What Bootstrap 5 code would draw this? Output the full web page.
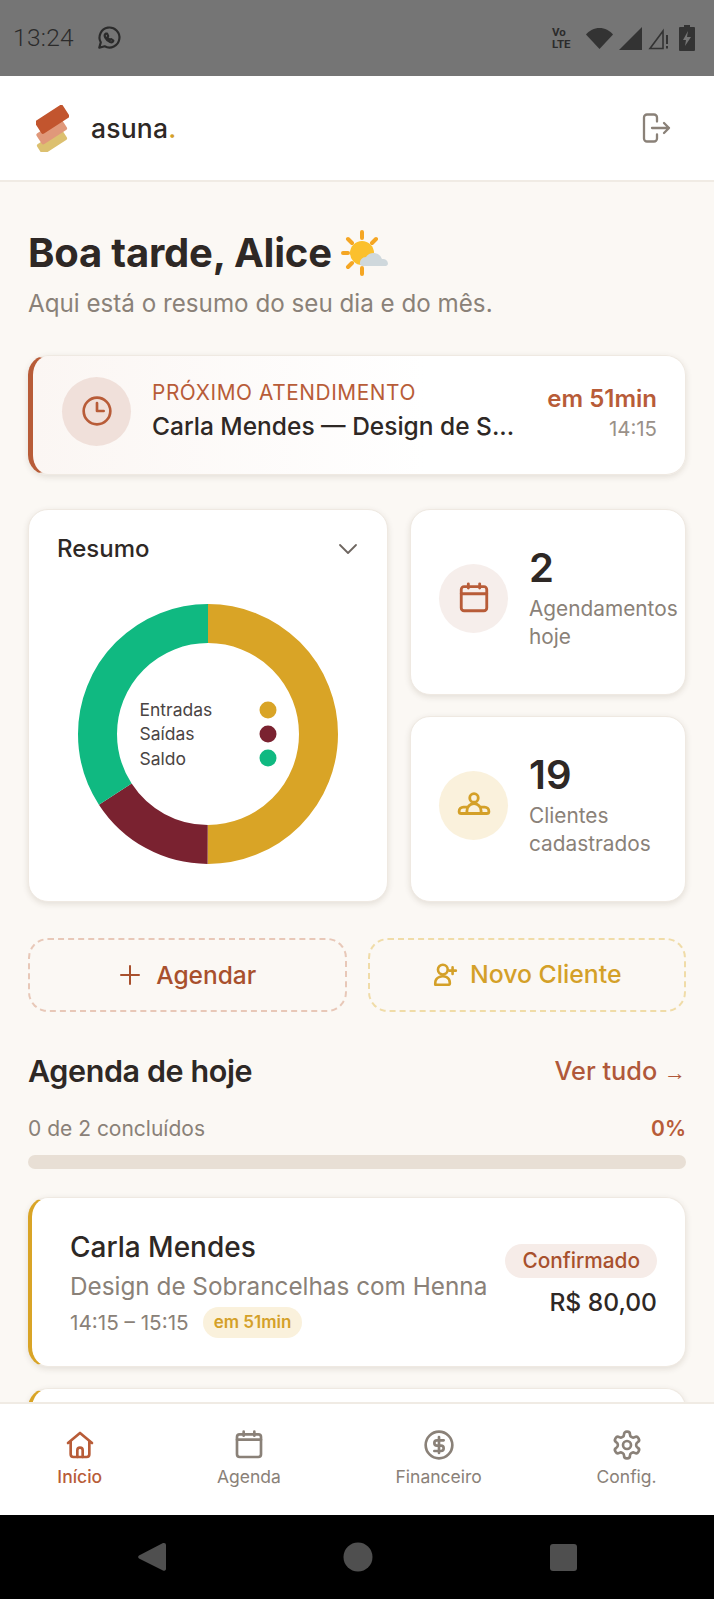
<!DOCTYPE html>
<html lang="pt-BR">
<head>
    <meta charset="UTF-8">
    <meta name="viewport" content="width=device-width, initial-scale=1.0">
    <title>asuna - Início</title>
    <link href="https://cdn.jsdelivr.net/npm/bootstrap@5.3.0/dist/css/bootstrap.min.css" rel="stylesheet">
    <style>
        html, body { height: 1599px; overflow: hidden; }
        body { font-family: Inter, "Liberation Sans", sans-serif; background: #fbf8f4; color: #2e2825; }
        svg { display: block; flex-shrink: 0; }
        .ic { fill: none; stroke: currentColor; stroke-width: 2; stroke-linecap: round; stroke-linejoin: round; }

        .frame { height: 1599px; }
        .status-bar { height: 76px; background: #757575; color: #2b2b2b; padding: 0 19px 0 13px; flex-shrink: 0; }
        .status-time { font-family: Roboto, sans-serif; font-size: 24.5px; font-weight: 300; margin-right: 22px; letter-spacing: .3px; }
        .status-icons { gap: 6px; }
        .volte { font-family: Roboto, sans-serif; font-size: 11.5px; font-weight: 700; line-height: 12px; width: 28px; }
        .battery { margin-left: 3px; }

        .top-bar { height: 106px; background: #fff; border-bottom: 2px solid #f0ebe4; padding: 0 43px 0 36px; flex-shrink: 0; }
        .brand { font-size: 26.5px; font-weight: 500; color: #2e2825; margin: 2px 0 0 22px; letter-spacing: .2px; }
        .brand span { color: #d4a028; }
        .logout { color: #8a8178; stroke-width: 2.3; }

        .page { padding: 0 28px; overflow: hidden; min-height: 0; }
        .hello { font-size: 40px; font-weight: 700; line-height: 46px; margin: 48px 0 0; letter-spacing: -.2px; color: #2e2825; }
        .hello-sub { font-size: 24.2px; line-height: 30px; color: #8a8178; margin: 13px 0 36px; }

        .soft-card { background: #fff; border: 1px solid #efe9e2; border-radius: 20px; box-shadow: 0 2px 6px rgba(60, 40, 20, .12); }
        .next-card { height: 120px; border-left: 5px solid #b85c38; padding: 0 28px 8px 29px; margin-bottom: 34px; background: linear-gradient(90deg, #fbf6f3, #fff 60%); }
        .round-icon { width: 69px; height: 69px; border-radius: 50%; flex-shrink: 0; }
        .tint-rust { background: #f0e0da; color: #b85c38; }
        .tint-rose { background: #f6eeeb; color: #b85c38; }
        .tint-gold { background: #faf1dc; color: #d4a028; }
        .next-text { margin-left: 21px; padding-bottom: 2px; }
        .next-label { font-size: 20.8px; line-height: 26px; color: #b85c38; letter-spacing: .6px; margin-bottom: 6px; }
        .next-name { font-size: 24.5px; line-height: 28px; font-weight: 500; color: #2e2825; }
        .next-side { padding-top: 4px; }
        .next-when { font-size: 24px; line-height: 28px; font-weight: 600; color: #b85c38; margin-bottom: 3px; }
        .next-time { font-size: 20.4px; line-height: 26px; color: #9a9189; }

        .stats { display: grid; grid-template-columns: 360px 1fr; gap: 21px 22px; grid-template-rows: 186px 186px; margin-bottom: 36px; }
        .summary-card { grid-row: span 2; padding: 24px 28px; }
        .summary-title { font-size: 24px; line-height: 30px; font-weight: 500; }
        .donut { width: 260px; height: 260px; margin: 40px auto 0; }
        .donut-legend { top: 50%; left: 50%; transform: translate(-50%, -50%); width: 137px; font-size: 17.5px; line-height: 24.3px; color: #4a4443; }
        .dot { width: 17px; height: 17px; border-radius: 50%; }
        .stat-card { padding: 0 0 8px 28px; gap: 21px; }
        .stat-text { padding-bottom: 1px; }
        .stat-num { font-size: 40px; line-height: 46px; font-weight: 600; color: #2e2825; margin-bottom: 4px; }
        .stat-label { font-size: 20.8px; line-height: 28px; color: #8a8178; }

        .actions { gap: 21px; margin-bottom: 38px; }
        .dash-btn { flex: 1 1 0; height: 74px; border-radius: 20px; border: 2px dashed #e8c8b8; font-size: 24.5px; font-weight: 500; background: transparent; gap: 14px; color: #a8502d; }
        .dash-btn:hover { color: #a8502d; border-color: #e8c8b8; }
        .dash-gold { border-color: #f0dca8; color: #d4a028; gap: 12px; font-size: 24.8px; }
        .dash-gold:hover { color: #d4a028; border-color: #f0dca8; }
        .dash-gold .ic { stroke-width: 2.4; }

        .section-title { font-size: 30.5px; line-height: 42px; font-weight: 600; margin: 0; letter-spacing: -.4px; color: #2e2825; }
        .see-all { font-size: 25.3px; font-weight: 500; color: #b0583a; text-decoration: none; }
        .see-all small { font-family: "Liberation Sans", sans-serif; font-size: 22px; }
        .done-row { font-size: 21px; line-height: 26px; color: #8a8178; margin: 24px 0 13px; }
        .done-pct { font-weight: 600; color: #b85c38; }
        .day-bar { height: 14px; background: #e8dfd5; border-radius: 7px; margin-bottom: 28px; }

        .appt-card { height: 170px; border-left: 4px solid #d9a426; padding: 3px 28px 0 38px; margin-bottom: 21px; flex-shrink: 0; }
        .appt-name { font-size: 28px; line-height: 36px; font-weight: 500; }
        .appt-service { font-size: 24.3px; line-height: 32px; color: #8a8178; margin: 5px 0 5px; }
        .appt-time { font-size: 20.7px; line-height: 32px; color: #8a8178; }
        .soon-pill { font-size: 17px; line-height: 31px; font-weight: 600; color: #d4a028; background: #faf1dc; border-radius: 16px; padding: 0 11px; margin-left: 14px; }
        .appt-side { padding-bottom: 5px; }
        .state-pill { font-size: 20.8px; line-height: 34px; font-weight: 500; color: #a8502d; background: #f6ece8; border-radius: 17px; padding: 0 17px; }
        .appt-price { font-size: 24.6px; line-height: 32px; font-weight: 500; margin-top: 8px; color: #2e2825; }

        .tab-bar { height: 113px; background: #fff; border-top: 2px solid #f0ebe4; padding: 25px 0 0; flex-shrink: 0; }
        .tab-item { color: #8a8178; font-size: 17.5px; line-height: 24px; text-decoration: none; gap: 4px; }
        .tab-item.on { color: #b85c38; font-weight: 500; }
        .android-bar { height: 84px; background: #000; flex-shrink: 0; gap: 177px; }
    </style>
</head>
<body>
<div class="frame d-flex flex-column">

    <!-- barra de status -->
    <div class="status-bar d-flex align-items-center">
        <span class="status-time">13:24</span>
        <svg width="26" height="26" viewBox="0 0 24 24" class="ic"><path d="M3 21l1.400-5A9.200 9.200 0 1 1 8 19.600z"/><path d="M9 8c-1 .7-1.300 2-.5 3.500 1 2 2.500 3.300 4.500 4.200 1.300.5 2.500 0 3-1.200l-2-1.500-1 .8c-1-.5-2-1.500-2.500-2.500l.8-1-1-2.300z"/></svg>
        <div class="status-icons d-flex align-items-center ms-auto">
            <div class="volte">Vo<br>LTE</div>
            <svg width="27" height="21" viewBox="0 0 27 21"><path d="M13.500 21 0 6.500C3.500 2.500 8 0 13.500 0S23.500 2.500 27 6.500z" fill="#333"/></svg>
            <svg width="23" height="23" viewBox="0 0 23 23"><path d="M23 0v23H0z" fill="#333"/></svg>
            <svg width="22" height="23" viewBox="0 0 22 23" fill="none" stroke="#333" stroke-width="1.600"><path d="M15 4 2 21.500h13z"/><path d="M19 8v9M19 19v2.500" stroke-width="2"/></svg>
            <svg class="battery" width="16" height="26" viewBox="0 0 16 26"><path d="M5 0h6v2h4a1 1 0 0 1 1 1v22a1 1 0 0 1-1 1H1a1 1 0 0 1-1-1V3a1 1 0 0 1 1-1h4z" fill="#333"/><path d="M9 6 4 15h3l-1 6 6-9H8z" fill="#757575"/></svg>
        </div>
    </div>

    <!-- topo -->
    <header class="top-bar d-flex align-items-center">
        <svg width="33" height="47" viewBox="0 0 33 47">
            <rect x="1" y="31" width="30" height="12" rx="2" transform="rotate(-33 16 37)" fill="#dcc070"/>
            <rect x="1" y="20" width="30" height="13" rx="2" transform="rotate(-33 16 27)" fill="#e0987a"/>
            <rect x="0" y="7" width="33" height="15" rx="2" transform="rotate(-33 16 15)" fill="#c2552e"/>
        </svg>
        <span class="brand">asuna<span>.</span></span>
        <svg class="ic logout ms-auto" width="30" height="30" viewBox="0 0 30 30"><path d="M13 1.500H6a3 3 0 0 0-3 3v21a3 3 0 0 0 3 3h7a3 3 0 0 0 3-3v-4M16 8.500v-4a3 3 0 0 0-3-3"/><path d="M11 15h17M23 10l5 5-5 5"/></svg>
    </header>

    <main class="page flex-grow-1">
        <h1 class="hello d-flex align-items-center gap-2">Boa tarde, Alice
            <svg width="50" height="46" viewBox="0 0 50 46">
                <g stroke="#f5a623" stroke-width="4" stroke-linecap="round"><path d="M22 2v6M22 38v6M3 23h5M8 9l4 4M36 9l-4 4M8 37l4-4"/></g>
                <circle cx="22" cy="23" r="12" fill="#fbc02d"/>
                <path d="M20 34a6 6 0 0 1 6-7 9 9 0 0 1 16 2 5 5 0 0 1 6 5 3 3 0 0 1-2 2H22a3 3 0 0 1-2-2z" fill="#cfd8dc"/>
            </svg>
        </h1>
        <p class="hello-sub">Aqui está o resumo do seu dia e do mês.</p>

        <div class="soft-card next-card d-flex align-items-center">
            <div class="round-icon tint-rust d-flex align-items-center justify-content-center">
                <svg class="ic" width="32" height="32" viewBox="0 0 24 24"><circle cx="12" cy="12" r="10"/><path d="M12 6v6h5"/></svg>
            </div>
            <div class="next-text flex-grow-1">
                <div class="next-label">PRÓXIMO ATENDIMENTO</div>
                <div class="next-name">Carla Mendes — Design de S...</div>
            </div>
            <div class="next-side text-end">
                <div class="next-when">em 51min</div>
                <div class="next-time">14:15</div>
            </div>
        </div>

        <div class="stats">
            <div class="soft-card summary-card">
                <div class="d-flex justify-content-between align-items-center">
                    <span class="summary-title">Resumo</span>
                    <svg class="ic" width="22" height="22" viewBox="0 0 22 22" style="color:#6e6660"><path d="M3 7l8 8 8-8" stroke-width="1.800"/></svg>
                </div>
                <div class="donut position-relative">
                    <svg width="260" height="260" viewBox="0 0 260 260" fill="none" stroke-width="39">
                        <g transform="rotate(-90 130 130)">
                            <circle cx="130" cy="130" r="110.500" stroke="#d9a426" stroke-dasharray="347.150 347.150"/>
                            <circle cx="130" cy="130" r="110.500" stroke="#7a2230" stroke-dasharray="109.550 584.750" stroke-dashoffset="-347.150"/>
                            <circle cx="130" cy="130" r="110.500" stroke="#10b981" stroke-dasharray="237.600 456.700" stroke-dashoffset="-456.700"/>
                        </g>
                    </svg>
                    <div class="donut-legend position-absolute">
                        <div class="d-flex justify-content-between align-items-center">Entradas <span class="dot" style="background:#d9a426"></span></div>
                        <div class="d-flex justify-content-between align-items-center">Saídas <span class="dot" style="background:#7a2230"></span></div>
                        <div class="d-flex justify-content-between align-items-center">Saldo <span class="dot" style="background:#10b981"></span></div>
                    </div>
                </div>
            </div>

            <div class="soft-card stat-card d-flex align-items-center">
                <div class="round-icon tint-rose d-flex align-items-center justify-content-center">
                    <svg class="ic" width="34" height="34" viewBox="0 0 24 24"><rect x="3" y="4" width="18" height="17" rx="2"/><path d="M16 2v3M8 2v3M3 9h18"/></svg>
                </div>
                <div class="stat-text">
                    <div class="stat-num">2</div>
                    <div class="stat-label">Agendamentos<br>hoje</div>
                </div>
            </div>

            <div class="soft-card stat-card d-flex align-items-center">
                <div class="round-icon tint-gold d-flex align-items-center justify-content-center">
                    <svg class="ic" width="34" height="34" viewBox="0 0 24 24"><circle cx="12" cy="7" r="3"/><path d="M7 18v-2a5 5 0 0 1 10 0v2M7 13.500H4.500A3 3 0 0 0 1.500 16.500 1.500 1.500 0 0 0 3 18h18a1.500 1.500 0 0 0 1.500-1.500 3 3 0 0 0-3-3H17"/></svg>
                </div>
                <div class="stat-text">
                    <div class="stat-num">19</div>
                    <div class="stat-label">Clientes<br>cadastrados</div>
                </div>
            </div>
        </div>

        <div class="actions d-flex">
            <button type="button" class="btn dash-btn d-flex align-items-center justify-content-center">
                <svg class="ic" width="24" height="24" viewBox="0 0 24 24"><path d="M12 3v18M3 12h18"/></svg>
                Agendar
            </button>
            <button type="button" class="btn dash-btn dash-gold d-flex align-items-center justify-content-center">
                <svg class="ic" width="26" height="26" viewBox="0 0 24 24"><circle cx="10" cy="7" r="4.500"/><path d="M3 21v-1.500a6 6 0 0 1 3.500-5.500c2-1 5-1 7 0 2 1 3 3 3 5.500 0 1-1 1.500-2 1.500H4a1 1 0 0 1-1-1"/><path d="M19 5v6M16 8h6"/></svg>
                Novo Cliente
            </button>
        </div>

        <div class="d-flex justify-content-between align-items-center">
            <h2 class="section-title">Agenda de hoje</h2>
            <a class="see-all" href="#">Ver tudo <small>→</small></a>
        </div>
        <div class="done-row d-flex justify-content-between">
            <span>0 de 2 concluídos</span>
            <span class="done-pct">0%</span>
        </div>
        <div class="day-bar"></div>

        <div class="soft-card appt-card d-flex align-items-center">
            <div class="flex-grow-1">
                <div class="appt-name">Carla Mendes</div>
                <div class="appt-service">Design de Sobrancelhas com Henna</div>
                <div class="appt-time d-flex align-items-center">14:15 – 15:15 <span class="soon-pill">em 51min</span></div>
            </div>
            <div class="appt-side d-flex flex-column align-items-end">
                <span class="state-pill">Confirmado</span>
                <div class="appt-price">R$ 80,00</div>
            </div>
        </div>
        <div class="soft-card appt-card"></div>
    </main>

    <!-- navegação -->
    <nav class="tab-bar d-flex justify-content-around align-items-start">
        <a class="tab-item on d-flex flex-column align-items-center" href="#">
            <svg class="ic" width="32" height="32" viewBox="0 0 24 24"><path d="M3 10.500 12 3l9 7.500M5 9v10a2 2 0 0 0 2 2h10a2 2 0 0 0 2-2V9"/><path d="M10 21v-5a2 2 0 0 1 4 0v5"/></svg>
            Início
        </a>
        <a class="tab-item d-flex flex-column align-items-center" href="#">
            <svg class="ic" width="32" height="32" viewBox="0 0 24 24"><rect x="3" y="4" width="18" height="17" rx="2"/><path d="M16 2v3M8 2v3M3 8h18"/></svg>
            Agenda
        </a>
        <a class="tab-item d-flex flex-column align-items-center" href="#">
            <svg class="ic" width="32" height="32" viewBox="0 0 24 24"><circle cx="12" cy="12" r="10"/><path d="M15.500 8.500h-5a2 2 0 0 0 0 4h3a2 2 0 0 1 0 4h-5M12 6v12"/></svg>
            Financeiro
        </a>
        <a class="tab-item d-flex flex-column align-items-center" href="#">
            <svg class="ic" width="32" height="32" viewBox="0 0 24 24"><path d="M12.220 2h-.44a2 2 0 0 0-2 2v.18a2 2 0 0 1-1 1.730l-.43.250a2 2 0 0 1-2 0l-.15-.08a2 2 0 0 0-2.730.730l-.22.380a2 2 0 0 0 .730 2.730l.15.1a2 2 0 0 1 1 1.720v.51a2 2 0 0 1-1 1.740l-.15.09a2 2 0 0 0-.730 2.730l.22.380a2 2 0 0 0 2.730.730l.15-.08a2 2 0 0 1 2 0l.43.250a2 2 0 0 1 1 1.730V20a2 2 0 0 0 2 2h.44a2 2 0 0 0 2-2v-.18a2 2 0 0 1 1-1.730l.43-.250a2 2 0 0 1 2 0l.15.08a2 2 0 0 0 2.730-.730l.22-.39a2 2 0 0 0-.730-2.730l-.15-.08a2 2 0 0 1-1-1.740v-.5a2 2 0 0 1 1-1.740l.15-.09a2 2 0 0 0 .730-2.730l-.22-.38a2 2 0 0 0-2.730-.730l-.15.08a2 2 0 0 1-2 0l-.43-.25a2 2 0 0 1-1-1.730V4a2 2 0 0 0-2-2z"/><circle cx="12" cy="12" r="3"/></svg>
            Config.
        </a>
    </nav>

    <!-- botões do android -->
    <div class="android-bar d-flex align-items-center justify-content-center">
        <svg width="28" height="30" viewBox="0 0 28 30"><path d="M26 1a2 2 0 0 1 2 2v24a2 2 0 0 1-3 1.500L1 16.500a2 2 0 0 1 0-3L25 1z" fill="#4f4f4f"/></svg>
        <svg width="30" height="30" viewBox="0 0 30 30"><circle cx="15" cy="15" r="14.500" fill="#4f4f4f"/></svg>
        <svg width="27" height="27" viewBox="0 0 27 27"><rect width="27" height="27" rx="3" fill="#4f4f4f"/></svg>
    </div>
</div>
<script src="https://cdn.jsdelivr.net/npm/bootstrap@5.3.0/dist/js/bootstrap.bundle.min.js"></script>
</body>
</html>
